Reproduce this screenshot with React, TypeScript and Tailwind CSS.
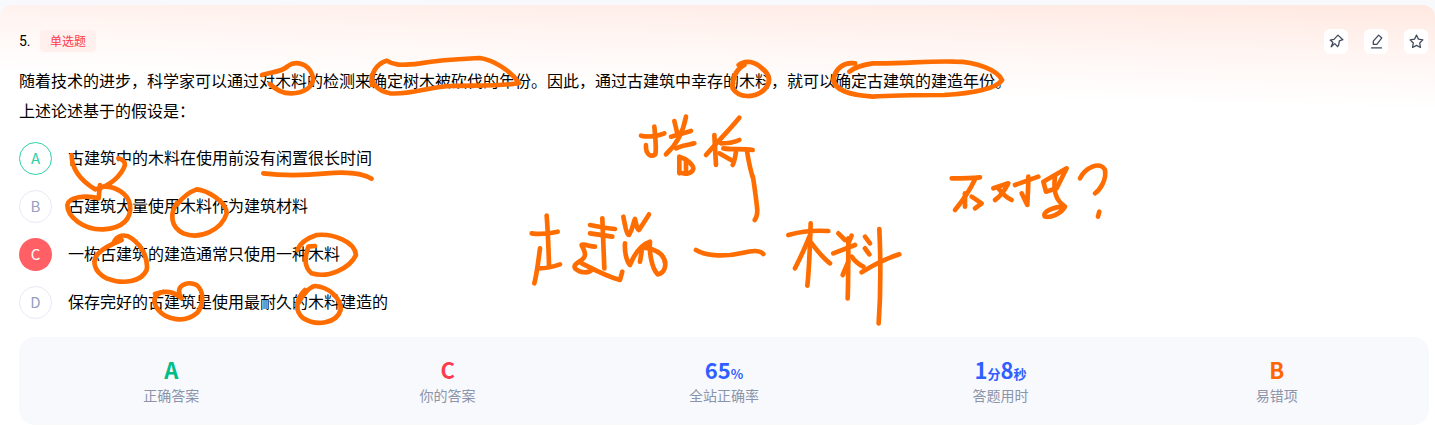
const options = [
  { key: 'A', text: '古建筑中的木料在使用前没有闲置很长时间', badge: 'border border-[#2fcfa6] text-[#2fcfa6] bg-white' },
  { key: 'B', text: '古建筑大量使用木料作为建筑材料', badge: 'border border-[#e6e9f5] text-[#96a0c2] bg-white' },
  { key: 'C', text: '一栋古建筑的建造通常只使用一种木料', badge: 'bg-[#ff5f65] text-white' },
  { key: 'D', text: '保存完好的古建筑是使用最耐久的木料建造的', badge: 'border border-[#e6e9f5] text-[#96a0c2] bg-white' },
]

// strokes are traced at 3x from the reference, hence the scale on each group
const traced = [
  {
    at: 'translate(0 0) scale(0.3333)',
    paths: [
      'M786 225 C816 216 846 216 864 198 C888 180 924 192 936 222 C948 252 924 273 888 279 C852 285 828 270 810 252',
      'M1116 255 C1110 222 1130 190 1160 182 C1180 195 1200 198 1260 190 C1330 178 1400 176 1440 174 C1480 180 1530 210 1557 249 C1520 258 1440 256 1350 258 C1280 262 1230 285 1170 280 C1130 272 1115 250 1116 225',
      'M790 520 C850 528 920 526 980 520 C1040 514 1090 521 1115 536',
    ],
  },
  {
    at: 'translate(480 0) scale(0.357 0.3333)',
    paths: [
      'M740 195 C715 210 705 240 708 265 C725 295 770 295 795 270 C815 250 815 225 790 205 C770 185 745 178 725 195',
      'M1050 190 C1020 185 995 205 990 240 C995 270 1030 285 1100 290 C1160 285 1240 285 1300 285 C1380 280 1450 265 1462 240 C1450 210 1390 185 1330 185 C1260 182 1180 192 1100 190 C1070 195 1045 205 1035 215',
    ],
  },
  {
    at: 'translate(0 170) scale(0.3333)',
    paths: [
      'M300 45 L296 85 C258 75 205 80 202 105 C202 140 250 180 310 178 C370 175 395 145 390 105 C385 70 345 48 310 50',
      'M530 100 C510 130 510 170 550 190 C600 210 665 180 680 130 C680 95 620 60 590 58 C570 65 545 85 530 105',
      'M365 210 L340 220 C350 195 375 190 395 205 C430 230 445 270 440 300 C425 335 370 345 320 325 C280 305 275 270 295 250 C310 235 340 220 365 210',
      'M945 228 L925 230 C915 260 910 290 935 310 C985 325 1050 295 1068 255 C1065 215 1000 190 950 195 C920 205 900 220 892 240',
      'M465 372 C500 360 520 365 545 385 C520 350 560 330 590 345 C615 365 610 410 590 430 C555 460 500 450 475 420 C455 395 460 375 490 365',
      'M915 360 C885 390 885 425 910 445 C950 470 1010 460 1022 420 C1025 385 985 350 945 348 C925 352 905 380 895 400',
    ],
  },
  {
    at: 'translate(60 140) scale(0.3333)',
    paths: ['M35 45 C35 85 60 120 105 148 C150 140 185 105 195 75 C195 65 185 58 175 55'],
  },
  {
    // 搭桥
    at: 'translate(636 115) scale(0.3333)',
    paths: [
      'M15 62 C40 68 70 62 85 55',
      'M55 35 C58 70 62 100 58 118 C45 128 28 118 30 90',
      'M90 118 C115 95 140 60 150 5',
      'M115 18 L125 60',
      'M105 65 L165 48',
      'M120 100 C140 90 160 90 175 85',
      'M130 175 L130 125 C150 130 172 150 172 160 C170 175 150 180 130 172',
      'M150 140 L150 175',
      'M210 120 C240 85 280 45 310 8',
      'M235 60 L240 150',
      'M255 85 C275 85 300 80 310 75',
      'M250 115 L285 135',
      'M262 100 C290 105 320 100 350 105',
      'M300 110 C298 125 295 140 290 150',
      'M333 108 C338 140 345 170 350 186',
    ],
  },
  {
    at: 'translate(500 110) scale(0.3333)',
    paths: [
      'M759 201 C765 240 770 280 772 300 C772 315 768 325 764 330',
      'M588 420 C620 440 680 440 730 428 C755 422 780 420 790 432',
    ],
  },
  {
    // 古建筑
    at: 'translate(525 205) scale(0.3333)',
    paths: [
      'M20 85 C50 90 75 85 98 80',
      'M65 32 C68 70 70 110 72 180',
      'M45 130 C40 170 35 210 28 235',
      'M42 190 C65 190 85 185 105 178',
      'M195 60 C220 65 245 70 270 72',
      'M232 40 L238 190',
      'M195 85 L262 95',
      'M210 125 C195 125 175 115 170 120 C175 135 190 150 170 165 C155 175 145 180 150 190 C165 205 190 205 200 195',
      'M170 175 C200 190 245 215 285 225 L292 200',
      'M295 35 C300 60 305 90 312 90 C325 70 325 50 330 42 C335 65 340 85 345 70 C355 55 365 40 372 28',
      'M300 115 C298 140 305 170 315 180 C325 155 345 120 375 110 C372 140 380 190 398 208 C420 205 430 175 410 150 C395 135 370 125 345 130',
      'M350 140 L345 170',
    ],
  },
  {
    // 木料
    at: 'translate(780 215) scale(0.3333)',
    paths: [
      'M25 60 C60 50 100 45 145 48',
      'M92 25 C90 90 88 160 82 212',
      'M88 65 C75 100 60 130 45 160',
      'M95 85 C110 105 130 130 150 145',
      'M175 55 L195 75',
      'M215 62 L205 85',
      'M160 115 L225 90',
      'M205 70 C205 130 205 200 203 250',
      'M205 140 L188 180',
      'M215 125 C225 140 240 150 250 155',
      'M255 65 L270 85',
      'M255 100 L268 118',
      'M245 172 C280 150 320 130 358 118',
      'M298 42 C302 130 302 240 296 325',
    ],
  },
  {
    // 不对吗?
    at: 'translate(940 150) scale(0.3333)',
    paths: [
      'M35 85 C60 85 90 85 120 82',
      'M105 88 C90 120 70 150 45 180',
      'M75 130 L75 170',
      'M95 140 L125 160 L105 175',
      'M160 115 L205 100 C195 120 180 140 165 150',
      'M175 115 C190 135 205 145 215 150',
      'M225 105 L295 80',
      'M265 80 C265 120 262 150 262 165 L245 130',
      'M310 95 L380 55 L350 115 L318 125 Z',
      'M345 80 C340 120 345 150 375 170 C365 190 330 205 315 200 C305 185 340 170 375 170',
      'M420 85 C435 55 480 30 495 60 C500 90 480 120 465 130',
      'M478 185 L474 200',
    ],
  },
]

function Handwriting() {
  return (
    <svg className="absolute left-0 top-0 pointer-events-none" width="1435" height="426" fill="none" stroke="#ff6d00" strokeLinecap="round" strokeLinejoin="round">
      {traced.map((group, idx) => (
        <g key={idx} transform={group.at} strokeWidth="14">
          {group.paths.map((d, i) => <path key={i} d={d} />)}
        </g>
      ))}
    </svg>
  )
}

const iconProps = { width: 17, height: 17, viewBox: '0 0 24 24', fill: 'none', stroke: '#3f4a5c', strokeWidth: 1.8, strokeLinecap: 'round' as const, strokeLinejoin: 'round' as const }

function PinIcon() {
  return (
    <svg {...iconProps}>
      <path d="M14 3l7 6.5-5 1.5-1 6.5-1.5 1.5-4-4-5 4.5 2.5-6-4-3.5 5.5-1z" />
    </svg>
  )
}

function PenIcon() {
  return (
    <svg {...iconProps}>
      <path d="M5 21h14" />
      <path d="M15 3l4.5 4-7 9H7.5v-4.5z" />
    </svg>
  )
}

function StarIcon() {
  return (
    <svg {...iconProps}>
      <path d="M12 3l2.8 5.8 6.2.9-4.5 4.4 1.1 6.3-5.6-3-5.6 3 1.1-6.3L3 9.7l6.2-.9z" />
    </svg>
  )
}

function Stat({ label, children }: { label: string; children: React.ReactNode }) {
  return (
    <div className="flex flex-col items-center">
      <div className="h-[24px] flex items-baseline font-bold text-[22px] leading-[24px]">{children}</div>
      <div className="mt-[4px] text-[14px] leading-[20px] text-[#8b94a8]">{label}</div>
    </div>
  )
}

export default function App() {
  return (
    <div className="relative w-[1435px] h-[426px] overflow-hidden bg-[#f8f9fd] pt-[5px] text-black font-['Noto_Sans_CJK_SC','Noto_Sans',sans-serif]">
      <div className="h-[421px] rounded-t-xl pt-[23px] pl-[19px] pr-[6px] bg-[linear-gradient(181.5deg,#ffe8e1_0%,#fff6f3_12%,#ffffff_23%)]">
        {/* Header */}
        <div className="h-[26px] pr-px flex items-center justify-between">
          <div className="flex items-center gap-[10px]">
            <span className="w-[11px] text-[14px] font-['Roboto',sans-serif]">5.</span>
            <span className="w-[56px] h-[22px] rounded bg-[#fff0ee] text-[#ff3a4a] text-[12px] leading-[22px] text-center">单选题</span>
          </div>
          <div className="flex gap-4">
            {[PinIcon, PenIcon, StarIcon].map((Icon, idx) => (
              <button key={idx} className="w-[24px] h-[25px] rounded-md bg-white flex items-center justify-center">
                <Icon />
              </button>
            ))}
          </div>
        </div>

        {/* Question */}
        <div className="mt-[11px] text-[16px] leading-[30px]">
          <p>随着技术的进步，科学家可以通过对木料的检测来确定树木被砍伐的年份。因此，通过古建筑中幸存的木料，就可以确定古建筑的建造年份。</p>
          <p>上述论述基于的假设是：</p>
        </div>

        {/* Options */}
        <div className="mt-[17px] flex flex-col gap-[15px]">
          {options.map((opt) => (
            <div key={opt.key} className="flex items-center gap-4 h-[33px]">
              <div className={`w-[33px] h-[33px] rounded-full flex items-center justify-center text-[15px] ${opt.badge}`}>{opt.key}</div>
              <div className="pb-[3px] text-[16px]">{opt.text}</div>
            </div>
          ))}
        </div>

        {/* Stats */}
        <div className="mt-[18px] h-[88px] rounded-2xl bg-[#f8f9fd] px-[14px] grid grid-cols-5 items-center">
          <Stat label="正确答案"><span className="text-[#00bc85]">A</span></Stat>
          <Stat label="你的答案"><span className="text-[#ff3b4e]">C</span></Stat>
          <Stat label="全站正确率">
            <span className="text-[#2f5fff]">65<span className="text-[13px]">%</span></span>
          </Stat>
          <Stat label="答题用时">
            <span className="text-[#2f5fff]">1<span className="text-[13px]">分</span>8<span className="text-[13px]">秒</span></span>
          </Stat>
          <Stat label="易错项"><span className="text-[#ff6600]">B</span></Stat>
        </div>
      </div>
      <Handwriting />
    </div>
  )
}
